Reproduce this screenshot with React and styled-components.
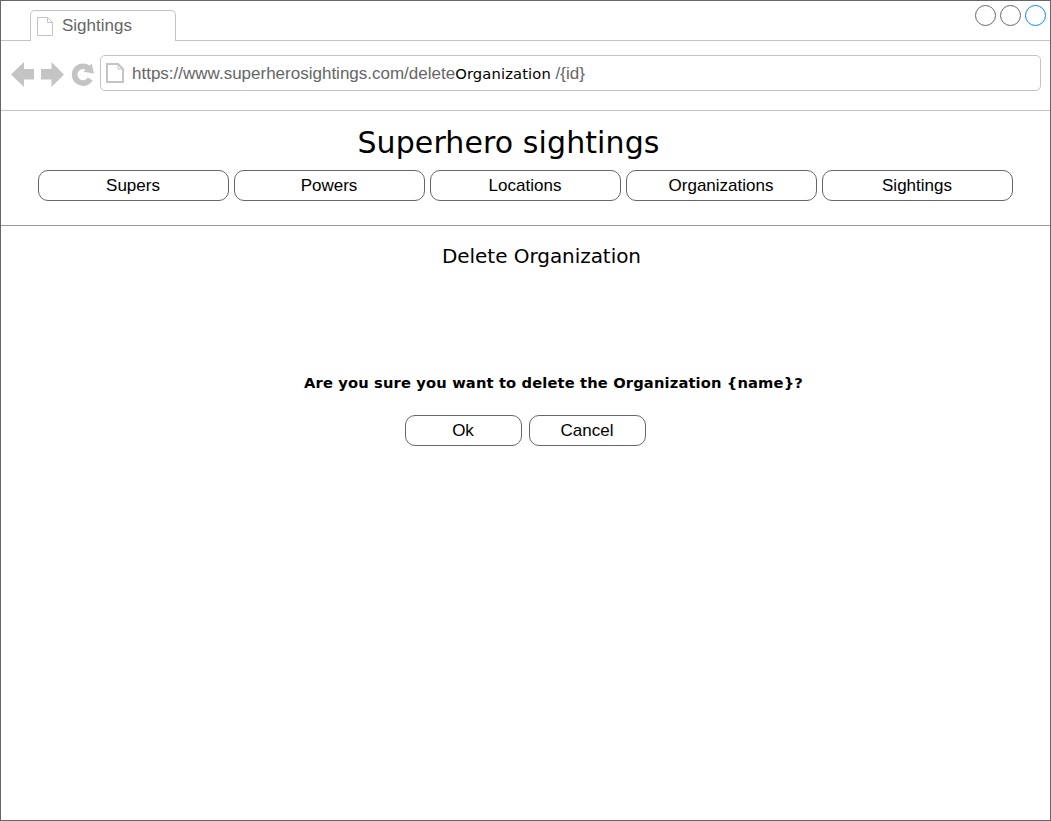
import React from "react";
import styled, { createGlobalStyle } from "styled-components";

const GlobalStyle = createGlobalStyle`
  *, *::before, *::after { box-sizing: border-box; }
  body { margin: 0; background: #fff; }
`;

const Window = styled.div`
  width: 1051px;
  height: 821px;
  border: 1px solid #666;
  background: #fff;
  color: #000;
  font-family: "Liberation Sans", Arial, sans-serif;
  font-size: 17px;
  overflow: hidden;
`;

const TabStrip = styled.header`
  display: flex;
  align-items: flex-end;
  height: 40px;
`;

const StripEdge = styled.div`
  height: 40px;
  border-bottom: 1px solid #c4c4c4;
  flex: ${(p) => (p.$grow ? "1" : "0 0 29px")};
  display: flex;
  justify-content: flex-end;
  gap: 4px;
  padding: 4px 4px 0 0;
`;

const Tab = styled.div`
  display: flex;
  align-items: flex-start;
  gap: 9px;
  width: 146px;
  height: 31px;
  padding: 6px 0 0 6px;
  border: 1px solid #c4c4c4;
  border-bottom: 0;
  border-radius: 5px 5px 0 0;
  color: #666;
  line-height: 18px;
`;

const WindowDot = styled.span`
  width: 21px;
  height: 21px;
  border-radius: 50%;
  border: 1px solid ${(p) => p.$color || "#666"};
`;

const Toolbar = styled.div`
  display: flex;
  height: 70px;
  padding: 14px 9px 0 10px;
  border-bottom: 1px solid #c4c4c4;
`;

const NavIcons = styled.svg`
  width: 89px;
  height: 36px;
  flex: none;
`;

const AddressBar = styled.div`
  display: flex;
  flex: 1;
  align-items: center;
  gap: 8px;
  height: 36px;
  padding-left: 5px;
  border: 1px solid #c4c4c4;
  border-radius: 5px;
  color: #666;
  white-space: pre;
`;

const Address = styled.span`
  padding-top: 2px;
  line-height: 20px;
`;

const Segment = styled.span`
  color: #000;
  font-family: "DejaVu Sans", Verdana, sans-serif;
  font-size: 14.7px;
  letter-spacing: 0.15px;
`;

const SiteHeader = styled.section`
  display: flex;
  flex-direction: column;
  align-items: center;
  height: 115px;
  padding-top: 14px;
  border-bottom: 1px solid #999;
`;

const Title = styled.h1`
  margin: 0 34px 9px 0;
  font: 400 30px/36px "DejaVu Sans", Verdana, sans-serif;
  letter-spacing: 0.1px;
  white-space: nowrap;
`;

const ButtonRow = styled.div`
  display: flex;
  gap: ${(p) => p.$gap}px;
`;

const Button = styled.button`
  width: ${(p) => p.$width}px;
  height: 31px;
  padding: 0 1px 0 0;
  border: 1px solid #666;
  border-radius: 10px;
  background: #fff;
  color: #000;
  font: 17px/19px "Liberation Sans", Arial, sans-serif;
`;

const Content = styled.main`
  display: flex;
  flex-direction: column;
  align-items: center;
  padding-top: 18px;
`;

const Heading = styled.h2`
  margin: 0 0 104px 32px;
  font: 400 20px/24px "DejaVu Sans", Verdana, sans-serif;
  letter-spacing: -0.05px;
`;

const Question = styled.p`
  margin: 0 0 21px 56px;
  font: 700 14.7px/22px "DejaVu Sans", Verdana, sans-serif;
  letter-spacing: 0.14px;
  white-space: nowrap;
`;

const PageShape = styled.svg`
  flex: none;
`;

const PageIcon = ({ width, height, stroke }) => {
  const s = stroke / 2;
  const r = width - s;
  const b = height - s;
  return (
    <PageShape width={width} height={height} fill="none" stroke="#c4c4c4" strokeWidth={stroke}>
      <path d={`M${s} ${s}H${r - 5}L${r} ${s + 5}V${b}H${s}Z`} />
      <path d={`M${r - 5} ${s}V${s + 5}H${r}`} strokeWidth="1" />
    </PageShape>
  );
};

const sections = ["Supers", "Powers", "Locations", "Organizations", "Sightings"];

export default function App() {
  return (
    <>
      <GlobalStyle />
      <Window>
        <TabStrip>
          <StripEdge />
          <Tab>
            <PageIcon width={16} height={19} stroke={1} />
            Sightings
          </Tab>
          <StripEdge $grow>
            <WindowDot />
            <WindowDot />
            <WindowDot $color="#008cff" />
          </StripEdge>
        </TabStrip>
        <Toolbar>
          <NavIcons viewBox="11 55 89 36" fill="#c4c4c4">
            <path d="M11 74.5L24 62V69H34V79.5H24V87Z" />
            <path d="M64 74.5L51.5 62V69H41V79.5H51.5V87Z" />
            <path d="M90.2 79A8.4 8.4 0 1 1 89 68.8" fill="none" stroke="#c4c4c4" strokeWidth="5.6" />
            <path d="M91.7 63.5L94 73.5L83.5 71.7Z" />
          </NavIcons>
          <AddressBar>
            <PageIcon width={18} height={20} stroke={2} />
            <Address>
              https://www.superherosightings.com/delete<Segment>Organization</Segment> /{"{id}"}
            </Address>
          </AddressBar>
        </Toolbar>
        <SiteHeader>
          <Title>Superhero sightings</Title>
          <ButtonRow $gap={5}>
            {sections.map((name) => (
              <Button key={name} $width={191}>{name}</Button>
            ))}
          </ButtonRow>
        </SiteHeader>
        <Content>
          <Heading>Delete Organization</Heading>
          <Question>Are you sure you want to delete the Organization {"{name}"}?</Question>
          <ButtonRow $gap={7}>
            <Button $width={117}>Ok</Button>
            <Button $width={117}>Cancel</Button>
          </ButtonRow>
        </Content>
      </Window>
    </>
  );
}
